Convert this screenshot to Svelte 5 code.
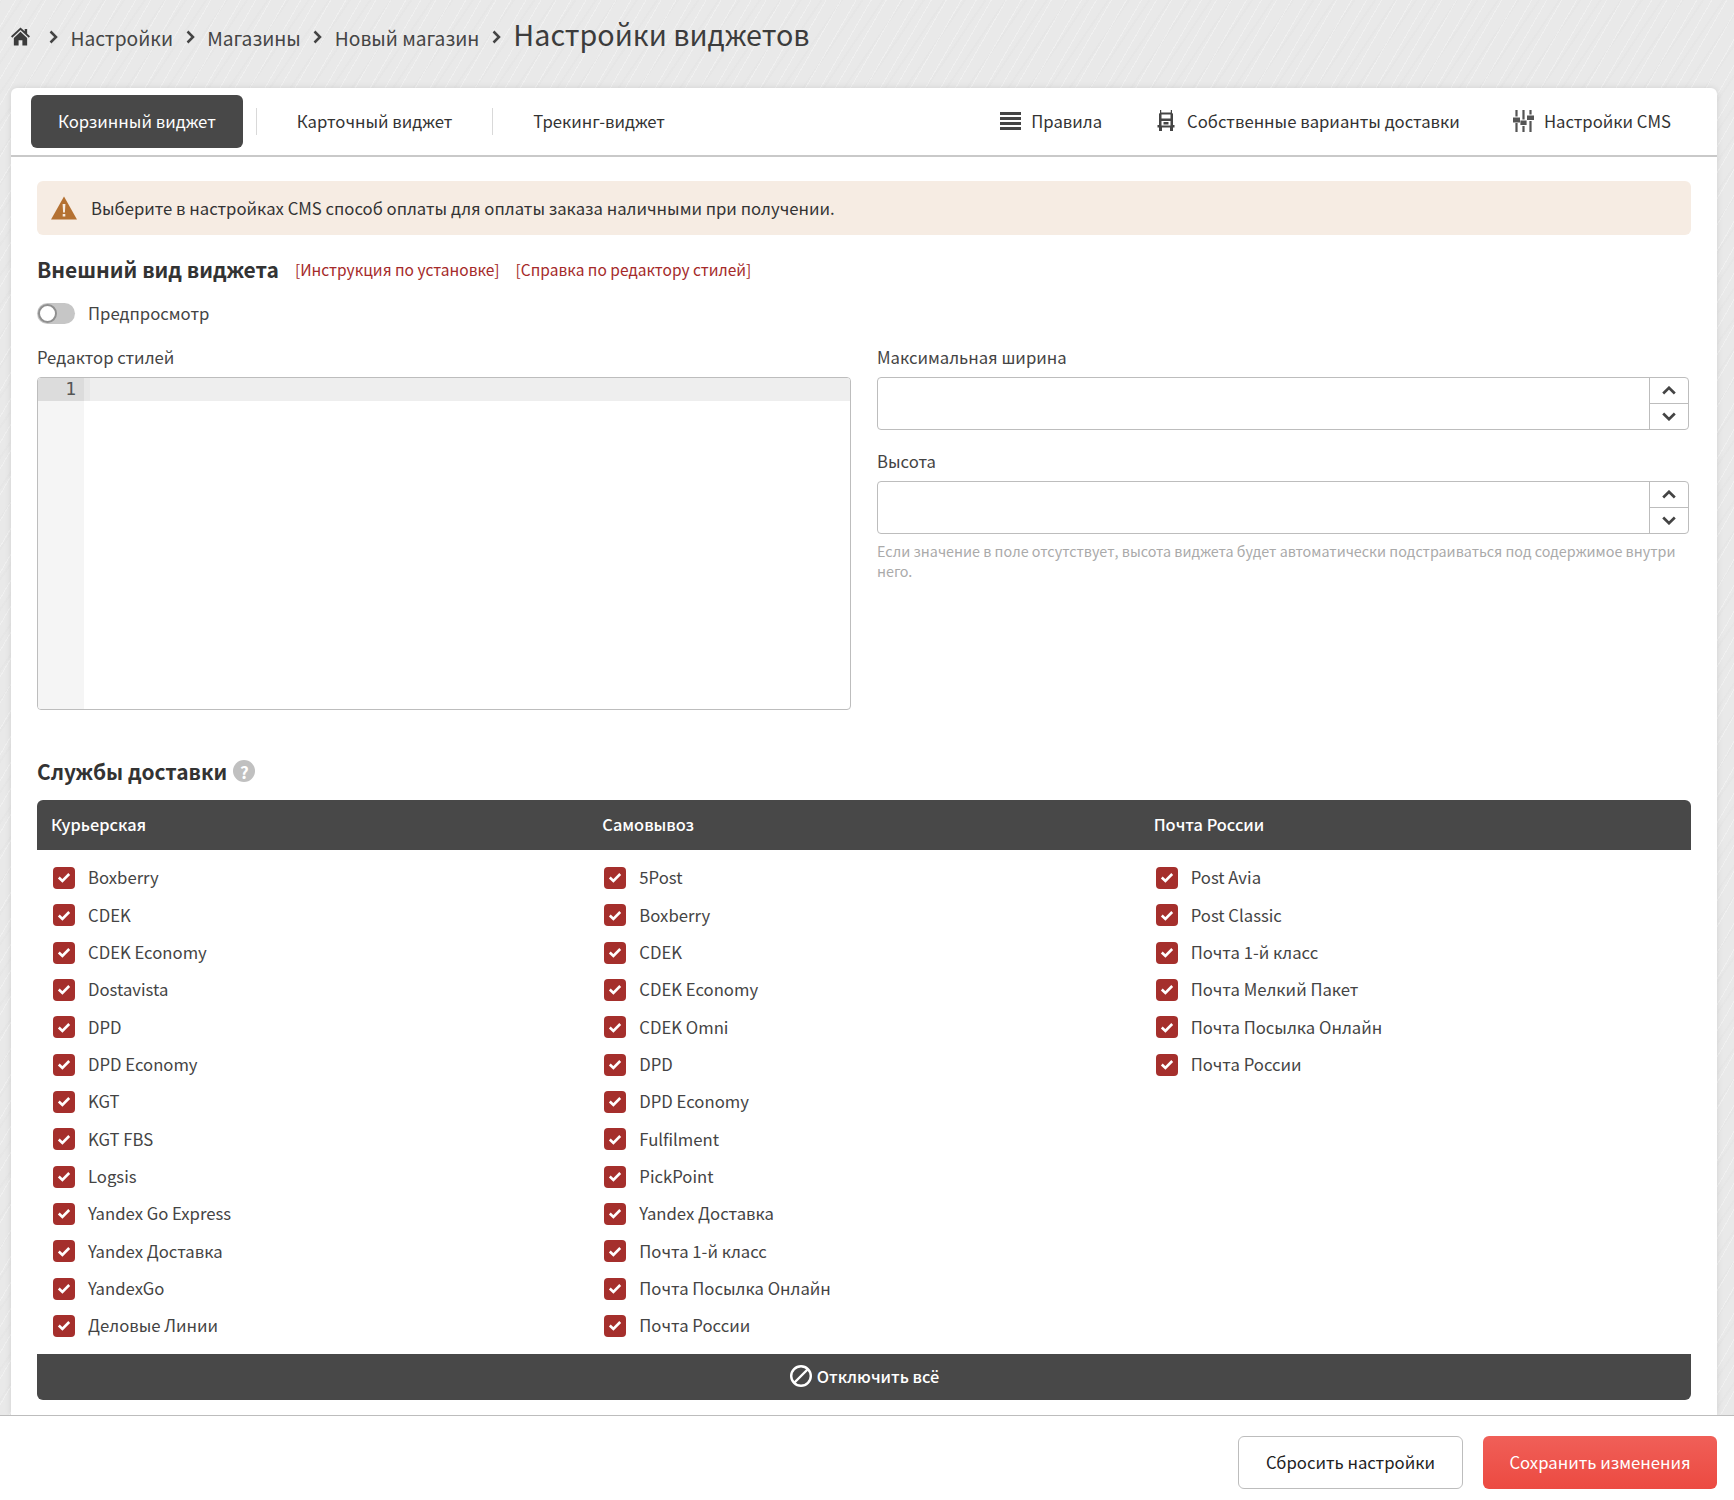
<script>
  const columns = [
    { title: 'Курьерская', items: ['Boxberry','CDEK','CDEK Economy','Dostavista','DPD','DPD Economy','KGT','KGT FBS','Logsis','Yandex Go Express','Yandex Доставка','YandexGo','Деловые Линии'] },
    { title: 'Самовывоз', items: ['5Post','Boxberry','CDEK','CDEK Economy','CDEK Omni','DPD','DPD Economy','Fulfilment','PickPoint','Yandex Доставка','Почта 1-й класс','Почта Посылка Онлайн','Почта России'] },
    { title: 'Почта России', items: ['Post Avia','Post Classic','Почта 1-й класс','Почта Мелкий Пакет','Почта Посылка Онлайн','Почта России'] }
  ];
  const crumbs = ['Настройки','Магазины','Новый магазин'];
</script>

{#snippet chev()}
  <svg class="chev" viewBox="0 0 9 14"><path d="M1.500 1.500L7 7l-5.500 5.500" fill="none" stroke="#444" stroke-width="2.500"/></svg>
{/snippet}

{#snippet spin()}
  <div class="spin">
    <div><svg viewBox="0 0 14 9"><path d="M1.200 7.500L7 1.800l5.800 5.700" fill="none" stroke="#444" stroke-width="2.700"/></svg></div>
    <div><svg viewBox="0 0 14 9"><path d="M1.200 1.500L7 7.200l5.800-5.700" fill="none" stroke="#444" stroke-width="2.700"/></svg></div>
  </div>
{/snippet}

<div class="page">
  <nav class="crumbs">
    <svg class="home" viewBox="0 0 20 19"><path d="M10 0L0 9.300l1.300 1.400L10 2.700l8.700 8 1.300-1.400-3-2.800V1.500h-2.600v2.600z" fill="#3c3c3c"/><path d="M10 4.500L3 11v8h5v-5.500h4V19h5v-8z" fill="#3c3c3c"/></svg>
    {@render chev()}
    {#each crumbs as c}
      <span class="crumb">{c}</span>
      {@render chev()}
    {/each}
    <h1>Настройки виджетов</h1>
  </nav>

  <main class="card">
    <header class="tabs">
      <button class="tab active">Корзинный виджет</button>
      <i class="sep"></i>
      <button class="tab">Карточный виджет</button>
      <i class="sep"></i>
      <button class="tab">Трекинг-виджет</button>
      <div class="tools">
        <span class="tool">
          <svg viewBox="0 0 21 18" width="21" height="18"><path d="M0 0h21v3H0zM0 5h21v3H0zM0 10h21v3H0zM0 15h21v3H0z" fill="#444"/></svg>
          Правила
        </span>
        <span class="tool truck">
          <svg viewBox="0 0 18 21" width="18" height="21"><path d="M3 0h1.200v2.500h9.600V0H15v3l1 .8V15h1.500v2.500H16V21h-3v-3.500H5V21H2v-3.500H.5V15H2V3.800L3 3z" fill="#444"/><path d="M4.500 4.500h9v4h-9z" fill="#fff"/><path d="M4.500 11h9v4.500h-9z" fill="#fff"/><path d="M6.500 12h5v2.500h-5z" fill="#444"/></svg>
          Собственные варианты доставки
        </span>
        <span class="tool">
          <svg viewBox="0 0 21 22" width="21" height="22" fill="#555"><path d="M2.400 0h2.200v6.500H2.400zM2.400 13h2.200v9H2.400zM0 7.500h7v5H0zM9.400 0h2.200v9.500H9.400zM9.400 16h2.200v6H9.400zM7.400 10.500h6.200V15H7.400zM16.400 0h2.200v4.500h-2.200zM16.400 11h2.200v11h-2.200zM14 5.500h7V10h-7z"/></svg>
          Настройки CMS
        </span>
      </div>
    </header>

    <div class="body">
      <div class="alert">
        <svg viewBox="0 0 26 24" width="26" height="24"><path d="M13 .5l13 23H0z" fill="#b47132"/><path d="M11.600 8h2.800l-.5 8.500h-1.800zM11.700 18h2.600v2.600h-2.600z" fill="#f6ece3"/></svg>
        <span>Выберите в настройках CMS способ оплаты для оплаты заказа наличными при получении.</span>
      </div>

      <div class="headline">
        <h2>Внешний вид виджета</h2>
        <a href="#a">[Инструкция по установке]</a>
        <a href="#b">[Справка по редактору стилей]</a>
      </div>

      <div class="preview">
        <span class="toggle"><i></i></span>
        <span>Предпросмотр</span>
      </div>

      <div class="forms">
        <div class="left">
          <div class="label">Редактор стилей</div>
          <div class="editor">
            <div class="line"><span class="num">1</span><span class="fold"></span></div>
            <div class="gutter"></div>
          </div>
        </div>
        <div class="right">
          <div class="label">Максимальная ширина</div>
          <div class="num-input"><div class="field"></div>{@render spin()}</div>
          <div class="label second">Высота</div>
          <div class="num-input"><div class="field"></div>{@render spin()}</div>
          <p class="hint">Если значение в поле отсутствует, высота виджета будет автоматически подстраиваться под содержимое внутри него.</p>
        </div>
      </div>

      <div class="svc-title">
        <h2>Службы доставки</h2>
        <span class="help">?</span>
      </div>

      <div class="thead">
        {#each columns as col}<div class="th">{col.title}</div>{/each}
      </div>
      <div class="tbody">
        {#each columns as col}
          <div class="col">
            {#each col.items as item}
              <div class="row">
                <span class="check"><svg viewBox="0 0 14 11" width="14" height="11"><path d="M1.800 5.500l3.600 3.500L12.200 2" fill="none" stroke="#fff" stroke-width="2.600"/></svg></span>
                <span>{item}</span>
              </div>
            {/each}
          </div>
        {/each}
      </div>
      <button class="off">
        <svg viewBox="0 0 24 24" width="24" height="24"><circle cx="12" cy="12" r="9.800" fill="none" stroke="#fff" stroke-width="2.400"/><path d="M5.500 18.500l13-13" stroke="#fff" stroke-width="2.400"/></svg>
        Отключить всё
      </button>
    </div>
  </main>

  <footer class="foot">
    <button class="btn reset">Сбросить настройки</button>
    <button class="btn save">Сохранить изменения</button>
  </footer>
</div>

<style>
  :global(body) {
    margin: 0;
    font-family: "Noto Sans CJK JP", "Noto Sans", sans-serif;
    color: #3a3a3a;
  }
  .page {
    width: 1734px;
    height: 1500px;
    display: flex;
    flex-direction: column;
    overflow: hidden;
    background-color: #e9e9e9;
    background-image:
      repeating-linear-gradient(120deg, rgba(255,255,255,.3) 0 1px, transparent 1px 13px),
      repeating-linear-gradient(124deg, rgba(0,0,0,.012) 0 2px, transparent 2px 17px);
  }
  button { font: inherit; border: 0; background: none; padding: 0; color: inherit; }
  h1, h2, p { margin: 0; font-weight: 400; }
  .crumbs {
    height: 88px;
    flex: none;
    display: flex;
    align-items: center;
    padding: 0 0 14px 11px;
    box-sizing: border-box;
    font-size: 19.200px;
    color: #454545;
  }
  .home { width: 19px; height: 19px; margin-right: 19px; margin-top: -2px; }
  .chev { width: 9px; height: 14px; margin-right: 12.500px; }
  .crumb { margin-right: 12.500px; line-height: 28px; margin-top: 2px; }
  h1 { font-size: 28.700px; color: #3c3c3c; line-height: 40px; margin-top: -7px; }

  .card {
    width: 1706px;
    margin-left: 11px;
    flex: 1;
    min-height: 0;
    background: #fff;
    border-radius: 6px 6px 0 0;
    box-shadow: 0 0 6px rgba(0,0,0,.1);
  }
  .tabs {
    height: 69px;
    box-sizing: border-box;
    display: flex;
    align-items: flex-start;
    padding: 7px 46px 0 20px;
    border-bottom: 2px solid #c9c9c9;
    font-size: 16.700px;
    color: #333;
  }
  .tab { height: 53px; padding: 0 27px 2px; border-radius: 6px; }
  .tab.active { background: #484848; color: #fff; }
  .sep { width: 1px; height: 27px; background: #d9d9d9; margin: 13px 13px 0; flex: none; }
  .tools { margin-left: auto; display: flex; gap: 55px; height: 51px; align-items: center; }
  .tool { display: flex; align-items: center; gap: 10px; }
  .truck { gap: 12px; margin-right: -2px; }
  .body { padding: 24px 26px 0; }
  .alert {
    height: 54px;
    display: flex;
    align-items: center;
    gap: 14px;
    padding-left: 14px;
    background: #f6ece3;
    border-radius: 6px;
    font-size: 16.700px;
    color: #333;
  }
  .headline {
    display: flex;
    align-items: center;
    margin-top: 18px;
    height: 32px;
  }
  h2 { font-size: 21px; font-weight: 700; color: #333; line-height: 32px; }
  .headline a { color: #a52a2a; text-decoration: none; font-size: 15.500px; margin-left: 16px; }
  .preview {
    display: flex;
    align-items: center;
    gap: 13px;
    margin-top: 16px;
    height: 24px;
    font-size: 16.700px;
    color: #444;
  }
  .toggle {
    width: 38px;
    height: 21px;
    border-radius: 11px;
    background: #c6c6c6;
    position: relative;
    display: block;
  }
  .toggle i {
    position: absolute;
    left: 1px;
    top: 1px;
    width: 15px;
    height: 15px;
    border-radius: 50%;
    background: #fff;
    border: 2px solid #8f8f8f;
  }
  .forms { display: flex; gap: 26px; margin-top: 20px; }
  .left { width: 814px; flex: none; }
  .right { flex: 1; min-width: 0; padding-right: 2px; }
  .label { font-size: 16.700px; color: #444; line-height: 25px; height: 25px; margin-bottom: 7px; }
  .label.second { margin-top: 19px; margin-bottom: 8px; height: 24px; }
  .editor {
    height: 333px;
    box-sizing: border-box;
    border: 1px solid #bdbdbd;
    border-radius: 4px;
    position: relative;
    overflow: hidden;
    background: #fff;
  }
  .gutter { position: absolute; left: 0; top: 0; bottom: 0; width: 46px; background: #f5f5f5; }
  .line { position: relative; z-index: 1; height: 23px; background: #eeeeee; display: flex; }
  .num { width: 46px; background: #dcdcdc; text-align: right; padding-right: 8px; box-sizing: border-box; font: 18px/21px "DejaVu Sans Mono", monospace; color: #555; }
  .fold { width: 6px; background: #e8e8e8; }
  .num-input {
    height: 53px;
    box-sizing: border-box;
    border: 1px solid #bdbdbd;
    border-radius: 4px;
    display: flex;
  }
  .field { flex: 1; }
  .spin { width: 39px; box-sizing: border-box; border-left: 1px solid #bdbdbd; display: flex; flex-direction: column; }
  .spin div { flex: 1; display: flex; align-items: center; justify-content: center; }
  .spin div + div { border-top: 1px solid #bdbdbd; }
  .spin svg { width: 14px; height: 9px; }
  .hint { font-size: 14.340px; line-height: 20px; color: #aaa; margin-top: 7px; }

  .svc-title { display: flex; align-items: center; gap: 6px; margin-top: 45px; height: 32px; }
  .svc-title h2 { font-size: 20.900px; }
  .help {
    width: 22px;
    height: 22px;
    border-radius: 50%;
    background: #c0c0c0;
    color: #fff;
    font-size: 17px;
    font-weight: 700;
    display: flex;
    align-items: center;
    justify-content: center;
  }
  .thead {
    margin-top: 13px;
    height: 50px;
    box-sizing: border-box;
    padding-bottom: 2px;
    background: #484848;
    color: #fff;
    border-radius: 6px 6px 0 0;
    display: grid;
    grid-template-columns: repeat(3, 1fr);
    align-items: center;
    font-size: 16.350px;
    font-weight: 500;
  }
  .th { padding-left: 14px; }
  .tbody {
    display: grid;
    grid-template-columns: repeat(3, 1fr);
    padding-top: 8.800px;
    height: 504px;
    box-sizing: border-box;
  }
  .col { padding-left: 16px; }
  .row { height: 37.330px; display: flex; align-items: center; gap: 13px; font-size: 16.700px; color: #444; }
  .check {
    width: 22px;
    height: 22px;
    margin-top: 1px;
    border-radius: 4px;
    background: #a52f2c;
    display: flex;
    align-items: center;
    justify-content: center;
    flex: none;
  }
  .off {
    width: 100%;
    height: 46px;
    padding-bottom: 2px;
    background: #484848;
    color: #fff;
    font-size: 16.350px;
    font-weight: 500;
    border-radius: 0 0 6px 6px;
    display: flex;
    align-items: center;
    justify-content: center;
    gap: 4px;
  }
  .foot {
    height: 85px;
    flex: none;
    box-sizing: border-box;
    border-top: 1px solid #bdbdbd;
    background: #fff;
    display: flex;
    justify-content: flex-end;
    gap: 20px;
    padding: 20px 17px 0 0;
  }
  .btn { height: 53px; padding-bottom: 2px; border-radius: 6px; font-size: 16.700px; box-sizing: border-box; }
  .reset { width: 225px; border: 1px solid #bdbdbd; color: #222; background: #fff; }
  .save { width: 234px; color: #fff; background: linear-gradient(#f05f58, #ec4a41); }
</style>
